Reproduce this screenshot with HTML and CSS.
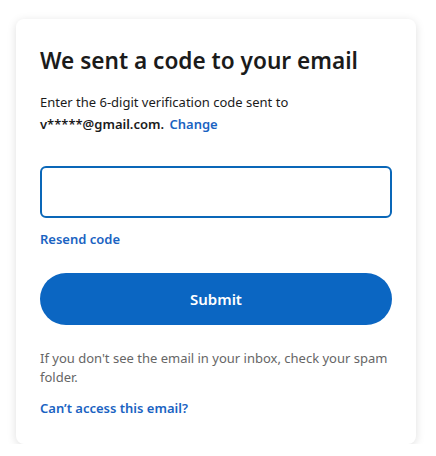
FILE: index.html
```html
<!DOCTYPE html>
<html lang="en">
<head>
<meta charset="utf-8">
<title>Verify email</title>
<link rel="stylesheet" href="styles.css">
</head>
<body>
<div class="card">
  <h1 class="title">We sent a code to your email</h1>
  <p class="desc">Enter the 6-digit verification code sent to <span class="email">v*****@gmail.com.</span> <a class="link change" href="#">Change</a></p>
  <input class="code" type="text" aria-label="Verification code">
  <a class="link resend" href="#">Resend code</a>
  <button class="submit" type="button">Submit</button>
  <p class="hint">If you don't see the email in your inbox, check your spam folder.</p>
  <a class="link cant" href="#">Can’t access this email?</a>
</div>
</body>
</html>
```
FILE: styles.css
```css
html, body {
  margin: 0;
  padding: 0;
  background: #ffffff;
}
body {
  font-family: "Noto Sans", "Open Sans", sans-serif;
  color: #1b1b1b;
}
.card {
  box-sizing: border-box;
  margin: 19px 0 0 16px;
  width: 400px;
  height: 425px;
  padding: 26px 24px 0 24px;
  background: #fff;
  border-radius: 8px;
  box-shadow: 0 2px 10px rgba(0,0,0,0.13);
  display: flex;
  flex-direction: column;
  align-items: flex-start;
}
.title {
  margin: 0;
  font-size: 22.6px;
  line-height: 32px;
  font-weight: 600;
  color: #1b1b1b;
}
.desc {
  margin: 14px 0 0 0;
  font-size: 13px;
  line-height: 22px;
  color: #1b1b1b;
}
.email {
  font-weight: 600;
  margin-right: 2px;
}
.link {
  color: #1a63c2;
  font-weight: 600;
  text-decoration: none;
  font-size: 13px;
}
.code {
  box-sizing: border-box;
  margin-top: 31px;
  width: 352px;
  height: 52px;
  border: 2px solid #0a67b8;
  border-radius: 6px;
  outline: none;
  background: #fff;
}
.resend {
  margin-top: 10px;
  line-height: 22px;
}
.submit {
  margin-top: 23px;
  width: 352px;
  height: 52px;
  border: none;
  border-radius: 26px;
  background: #0b66c2;
  color: #fff;
  font-family: inherit;
  font-size: 15px;
  font-weight: 600;
}
.hint {
  margin: 24px 0 0 0;
  font-size: 13px;
  line-height: 19px;
  color: #666;
}
.cant {
  margin-top: 10px;
  line-height: 22px;
}
```
